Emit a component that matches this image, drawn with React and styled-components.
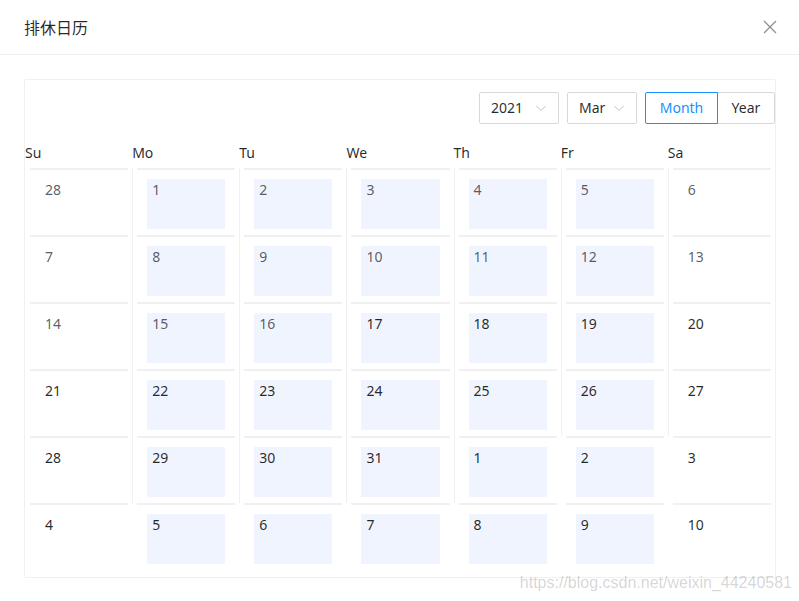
import React from "react";
import styled, { createGlobalStyle } from "styled-components";

const GlobalStyle = createGlobalStyle`
  html, body {
    margin: 0;
    padding: 0;
    background: #fff;
  }
  body {
    font-family: "Noto Sans", "Noto Sans CJK SC", sans-serif;
    font-size: 14px;
    color: rgba(0, 0, 0, 0.85);
  }
  * {
    box-sizing: border-box;
  }
`;

const Modal = styled.div`
  position: relative;
  width: 799px;
  height: 601px;
  background: #fff;
  overflow: hidden;
`;

const ModalHeader = styled.div`
  display: flex;
  align-items: center;
  justify-content: space-between;
  padding: 16px 21px 16px 24px;
  border-bottom: 1px solid #f0f0f0;
`;

const Title = styled.div`
  font-family: "Noto Sans CJK SC", sans-serif;
  font-size: 16px;
  line-height: 22px;
  color: rgba(0, 0, 0, 0.85);
`;

const CloseButton = styled.button`
  display: flex;
  align-items: center;
  justify-content: center;
  width: 16px;
  height: 22px;
  padding: 0;
  border: 0;
  background: none;
  cursor: pointer;
`;

const ModalBody = styled.div`
  padding: 24px 23px 24px 24px;
`;

const Card = styled.div`
  border: 1px solid #f0f0f0;
  border-radius: 2px;
  padding-bottom: 7px;
`;

const Toolbar = styled.div`
  display: flex;
  justify-content: flex-end;
  gap: 8px;
  padding: 12px 0;
`;

const Select = styled.div`
  display: flex;
  align-items: center;
  justify-content: space-between;
  width: ${(p) => p.$width}px;
  height: 32px;
  padding: 0 11px;
  border: 1px solid #d9d9d9;
  border-radius: 2px;
  color: rgba(0, 0, 0, 0.85);
  line-height: 30px;
`;

const RadioGroup = styled.div`
  display: flex;
`;

const RadioButton = styled.div`
  width: ${(p) => p.$width}px;
  height: 32px;
  line-height: 30px;
  text-align: center;
  border: 1px solid ${(p) => (p.$active ? "#1890ff" : "#d9d9d9")};
  color: ${(p) => (p.$active ? "#1890ff" : "rgba(0, 0, 0, 0.85)")};
  margin-left: ${(p) => (p.$first ? "0" : "-1px")};
  position: relative;
  z-index: ${(p) => (p.$active ? 1 : 0)};
  border-radius: ${(p) => (p.$first ? "2px 0 0 2px" : "0 2px 2px 0")};
`;

const Grid = styled.div`
  display: grid;
  grid-template-columns: repeat(7, 1fr);
`;

const WeekDay = styled.div`
  padding: 8px 0 6px;
  line-height: 18px;
  color: rgba(0, 0, 0, 0.85);
`;

const DayCol = styled.div`
  border-left: 1px solid ${(p) => (p.$line ? "#f0f0f0" : "transparent")};
`;

const DayCell = styled.div`
  margin: 0 4px;
  height: 67px;
  border-top: 2px solid #f0f0f0;
  padding: 9px 10px 0;
`;

const DayBox = styled.div`
  height: 50px;
  padding: 0 5px;
  line-height: 22px;
  background: ${(p) => (p.$work ? "#f0f4ff" : "transparent")};
  color: ${(p) => (p.$past ? "rgba(0, 0, 0, 0.65)" : "rgba(0, 0, 0, 0.85)")};
`;

const Watermark = styled.div`
  position: absolute;
  right: 7px;
  bottom: 9px;
  font-family: "Liberation Sans", Arial, sans-serif;
  font-size: 16px;
  color: rgba(0, 0, 0, 0.18);
  pointer-events: none;
`;

const Chevron = () => (
  <svg width="12" height="12" viewBox="0 0 12 12" fill="none">
    <path d="M1.5 4 L6 8.5 L10.5 4" stroke="rgba(0,0,0,0.25)" strokeWidth="1" />
  </svg>
);

const CloseIcon = () => (
  <svg width="14" height="14" viewBox="0 0 14 14" fill="none">
    <path d="M1 1 L13 13 M13 1 L1 13" stroke="rgba(0,0,0,0.45)" strokeWidth="1.2" />
  </svg>
);

const weekDays = ["Su", "Mo", "Tu", "We", "Th", "Fr", "Sa"];

// 2021-03 calendar, starting Sunday Feb 28, "today" is Mar 17
const buildDays = () => {
  const days = [];
  const start = new Date(2021, 1, 28);
  for (let i = 0; i < 42; i++) {
    const d = new Date(start);
    d.setDate(start.getDate() + i);
    const month = d.getMonth();
    const date = d.getDate();
    days.push({
      date,
      inMonth: month === 2,
      past: month < 2 || (month === 2 && date < 17),
      work: i % 7 !== 0 && i % 7 !== 6,
    });
  }
  return days;
};

const App = () => {
  const days = buildDays();
  return (
    <>
      <GlobalStyle />
      <Modal>
        <ModalHeader>
          <Title>排休日历</Title>
          <CloseButton aria-label="Close">
            <CloseIcon />
          </CloseButton>
        </ModalHeader>
        <ModalBody>
          <Card>
            <Toolbar>
              <Select $width={80}>
                <span>2021</span>
                <Chevron />
              </Select>
              <Select $width={70}>
                <span>Mar</span>
                <Chevron />
              </Select>
              <RadioGroup>
                <RadioButton $active $first $width={73}>
                  Month
                </RadioButton>
                <RadioButton $width={58}>Year</RadioButton>
              </RadioGroup>
            </Toolbar>
            <Grid>
              {weekDays.map((w) => (
                <WeekDay key={w}>{w}</WeekDay>
              ))}
              {days.map((d, i) => {
                const col = i % 7;
                const prev = days[i - 1];
                const line = col !== 0 && (d.inMonth || (prev && prev.inMonth));
                return (
                  <DayCol key={i} $line={line}>
                    <DayCell>
                      <DayBox $work={d.work} $past={d.past}>
                        {d.date}
                      </DayBox>
                    </DayCell>
                  </DayCol>
                );
              })}
            </Grid>
          </Card>
        </ModalBody>
        <Watermark>https://blog.csdn.net/weixin_44240581</Watermark>
      </Modal>
    </>
  );
};

export default App;
